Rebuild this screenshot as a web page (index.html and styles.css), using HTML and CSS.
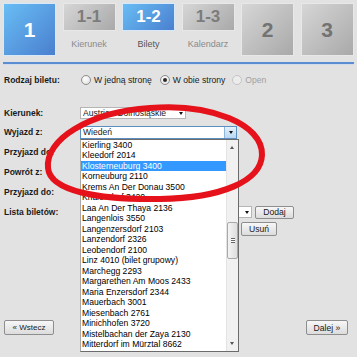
FILE: index.html
```html
<!DOCTYPE html>
<html lang="pl">
<head>
  <meta charset="UTF-8">
  <title>Bilety</title>
  <link rel="stylesheet" href="styles.css">
</head>
<body>
  <div class="page">
    <div class="steps">
      <div class="step big on">1</div>
      <div class="step">
        <div class="tile">1-1</div>
        <div class="cap">Kierunek</div>
      </div>
      <div class="step">
        <div class="tile on">1-2</div>
        <div class="cap now">Bilety</div>
      </div>
      <div class="step">
        <div class="tile">1-3</div>
        <div class="cap">Kalendarz</div>
      </div>
      <div class="step big">2</div>
      <div class="step big">3</div>
    </div>
    <div class="rule"></div>

    <div class="form">
      <div class="row kind">
        <div class="lbl">Rodzaj biletu:</div>
        <div class="radios">
          <span class="opt"><i class="radio"></i>W jedną stronę</span>
          <span class="opt"><i class="radio checked"></i>W obie strony</span>
          <span class="opt off"><i class="radio"></i>Open</span>
        </div>
      </div>

      <div class="row first">
        <div class="lbl">Kierunek:</div>
        <div class="select dir">Austria - Dolnośląskie<b class="arr"></b></div>
      </div>

      <div class="row">
        <div class="lbl">Wyjazd z:</div>
        <div class="select from open">
          Wiedeń
          <span class="btn-drop"><b class="arr"></b></span>
          <div class="list">
            <div class="item">Kierling 3400</div>
            <div class="item">Kleedorf 2014</div>
            <div class="item sel">Klosterneuburg 3400</div>
            <div class="item">Korneuburg 2110</div>
            <div class="item">Krems An Der Donau 3500</div>
            <div class="item">Kritzendorf 3420</div>
            <div class="item">Laa An Der Thaya 2136</div>
            <div class="item">Langenlois 3550</div>
            <div class="item">Langenzersdorf 2103</div>
            <div class="item">Lanzendorf 2326</div>
            <div class="item">Leobendorf 2100</div>
            <div class="item">Linz 4010 (bilet grupowy)</div>
            <div class="item">Marchegg 2293</div>
            <div class="item">Margarethen Am Moos 2433</div>
            <div class="item">Maria Enzersdorf 2344</div>
            <div class="item">Mauerbach 3001</div>
            <div class="item">Miesenbach 2761</div>
            <div class="item">Minichhofen 3720</div>
            <div class="item">Mistelbachan der Zaya 2130</div>
            <div class="item">Mitterdorf im Mürztal 8662</div>
            <div class="sb">
              <b class="up"></b>
              <div class="thumb"><span class="grip"></span></div>
              <b class="down"></b>
            </div>
          </div>
        </div>
      </div>

      <div class="row">
        <div class="lbl">Przyjazd do:</div>
        <div class="select mid"><b class="arr"></b></div>
      </div>
      <div class="row">
        <div class="lbl">Powrót z:</div>
        <div class="select mid"><b class="arr"></b></div>
      </div>
      <div class="row">
        <div class="lbl">Przyjazd do:</div>
        <div class="select mid"><b class="arr"></b></div>
      </div>
      <div class="row">
        <div class="lbl">Lista biletów:</div>
        <div class="pick">
          <div class="select wide"><b class="arr"></b></div>
          <button class="btn">Dodaj</button>
        </div>
      </div>
      <div class="row tickets">
        <div class="lbl"></div>
        <div class="pick top">
          <div class="listbox"></div>
          <button class="btn">Usuń</button>
        </div>
      </div>
    </div>

    <div class="nav">
      <button class="btn big-btn">« Wstecz</button>
      <button class="btn big-btn">Dalej »</button>
    </div>

    <svg class="mark" width="357" height="357" viewBox="0 0 357 357">
      <path d="M48 168 C45 140 88 112 150 108 C210 103 263 124 262 155 C261 181 222 198 160 199 C98 200 50 191 48 168 Z"
            fill="none" stroke="#e5121b" stroke-width="6"/>
    </svg>
  </div>
</body>
</html>
```

FILE: styles.css
```css
body {
  margin: 0;
  background: #e2e2e2;
  font-family: "Liberation Sans", Arial, sans-serif;
  color: #1a1a1a;
}

.page {
  position: relative;
  width: 357px;
  height: 357px;
  overflow: hidden;
}

/* steps */
.steps {
  display: flex;
  gap: 6.5px;
  padding: 3px 0 0 3px;
}
.step {
  width: 53px;
  display: flex;
  flex-direction: column;
  align-items: center;
}
.step.big,
.tile {
  box-sizing: border-box;
  width: 53px;
  border: 1px solid #e8e8e8;
  background: linear-gradient(135deg, #d6d6d6, #a9a9a9);
  color: #737373;
  font-weight: bold;
  display: flex;
  justify-content: center;
  align-items: center;
}
.step.big {
  height: 53px;
  font-size: 21px;
}
.tile {
  height: 28px;
  font-size: 17px;
  color: #7c7c7c;
}
.step.on,
.tile.on {
  background: linear-gradient(135deg, #68bdf4, #4a7fcf);
  border-color: #d7e8f8;
  color: #fff;
}
.cap {
  margin-top: 8px;
  font-size: 9px;
  color: #8a8a8a;
}
.cap.now {
  color: #555;
}

.rule {
  margin: 6px 3px 0 3px;
  height: 2px;
  background: #5a8dd4;
  border-bottom: 1px solid #d3dced;
}

/* form */
.form {
  padding: 5px 0 0 4px;
  font-size: 8.6px;
}
.row {
  display: grid;
  grid-template-columns: 76px auto;
  align-items: center;
  height: 20px;
}
.row.first {
  margin-top: 13px;
  height: 19px;
}
.lbl {
  font-weight: bold;
  font-size: 8.5px;
}

.radios {
  display: flex;
  align-items: center;
  gap: 8px;
  margin-left: 1px;
}
.opt {
  display: flex;
  align-items: center;
}
.opt.off {
  color: #a0a0a0;
  margin-left: -1px;
}
.radio {
  box-sizing: border-box;
  width: 10px;
  height: 10px;
  margin-right: 3px;
  border: 1px solid #8c8c8c;
  border-radius: 50%;
  background: radial-gradient(circle at 40% 35%, #fff, #dcdcdc);
  display: flex;
  justify-content: center;
  align-items: center;
}
.radio.checked::after {
  content: "";
  width: 4px;
  height: 4px;
  border-radius: 50%;
  background: #2a2a2a;
}
.opt.off .radio {
  border-color: #c4c4c4;
  background: #ececec;
}

.select {
  position: relative;
  box-sizing: border-box;
  height: 12px;
  padding: 0 12px 0 2px;
  line-height: 10px;
  background: #fff;
  border: 1px solid #b5b5b5;
  white-space: nowrap;
}
.select .arr {
  position: absolute;
  right: 2px;
  top: 4px;
  border-left: 2.5px solid transparent;
  border-right: 2.5px solid transparent;
  border-top: 3px solid #111;
}
.dir {
  width: 106px;
}
.mid {
  width: 150px;
}
.wide {
  width: 172px;
}
.from {
  width: 157px;
  height: 13px;
  line-height: 11px;
  border-color: #5b8fc2;
}
.btn-drop {
  position: absolute;
  right: 0;
  top: 0;
  width: 11px;
  height: 11px;
  background: linear-gradient(#e4f1fb, #b9d8f2);
  border-left: 1px solid #8fb6da;
}
.btn-drop .arr {
  right: 3px;
}

/* open drop list */
.list {
  position: absolute;
  left: -1px;
  top: 12px;
  box-sizing: border-box;
  width: 159px;
  height: 213px;
  padding-right: 12px;
  background: #fff;
  border: 1px solid #6b6b6b;
  border-left-color: #a8a8a8;
  line-height: 10.5px;
  z-index: 2;
}
.item {
  padding-left: 1px;
  color: #000;
}
.item.sel {
  background: #3399ff;
  color: #fff;
}
.sb {
  position: absolute;
  right: 0;
  top: 0;
  bottom: 0;
  width: 11px;
  background: #f1f1f1;
  border-left: 1px solid #e4e4e4;
}
.sb .up,
.sb .down {
  position: absolute;
  left: 3px;
  border-left: 2.5px solid transparent;
  border-right: 2.5px solid transparent;
}
.sb .up {
  top: 6px;
  border-bottom: 3px solid #555;
}
.sb .down {
  bottom: 6px;
  border-top: 3px solid #555;
}
.thumb {
  position: absolute;
  left: 0;
  right: 0;
  top: 82px;
  height: 37px;
  box-sizing: border-box;
  border: 1px solid #a9a9a9;
  border-radius: 2px;
  background: linear-gradient(90deg, #f4f4f4, #dedede);
  display: flex;
  justify-content: center;
  align-items: center;
}
.grip {
  width: 4px;
  height: 5px;
  border-top: 1px solid #666;
  border-bottom: 1px solid #666;
  box-sizing: border-box;
  background: linear-gradient(#fff 1px, #666 1px, #666 2px, #fff 2px);
}

.pick {
  display: flex;
  align-items: center;
  gap: 3px;
}
.pick.top {
  align-items: flex-start;
}
.row.tickets {
  height: auto;
  align-items: start;
}
.listbox {
  width: 158px;
  height: 80px;
  background: #fff;
  border: 1px solid #b5b5b5;
  box-sizing: border-box;
}

.btn {
  box-sizing: border-box;
  height: 13px;
  padding: 0 5px;
  font-family: "Liberation Sans", Arial, sans-serif;
  font-size: 8.6px;
  color: #1a1a1a;
  background: linear-gradient(#f7f7f7, #dcdcdc);
  border: 1px solid #8e8e8e;
  border-radius: 2px;
}
.pick .btn {
  width: 39px;
}
.pick.top .btn {
  width: 36px;
  height: 14px;
}

.nav {
  display: flex;
  justify-content: space-between;
  padding: 0 9px 0 4px;
  margin-top: 18px;
}
.big-btn {
  height: 15px;
}
.nav .btn:first-child {
  width: 50px;
  font-size: 8px;
}
.nav .btn:last-child {
  width: 42px;
}

.mark {
  position: absolute;
  left: 0;
  top: 0;
  pointer-events: none;
  z-index: 5;
}
```
